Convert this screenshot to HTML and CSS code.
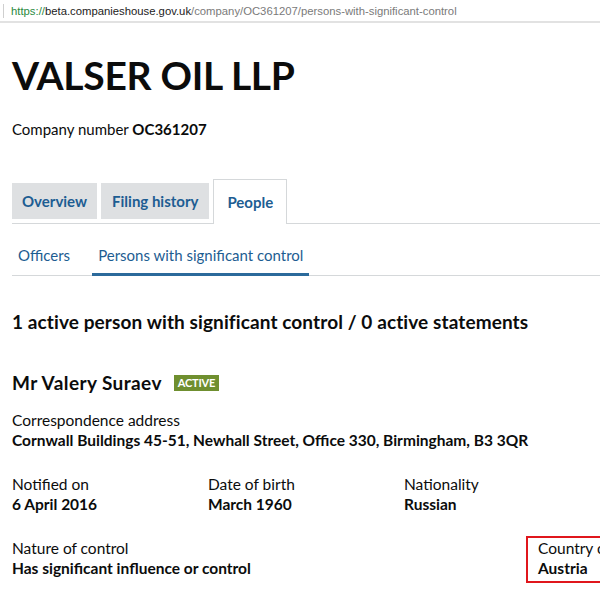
FILE: index.html
```html
<!DOCTYPE html>
<html lang="en">
<head>
    <meta charset="UTF-8">
    <title>VALSER OIL LLP - Persons with significant control</title>
    <link rel="stylesheet" href="styles.css">
</head>
<body>
    <!-- Browser address bar -->
    <div class="address-bar">
        <span class="url"><span class="url-scheme">https://</span><span class="url-host">beta.companieshouse.gov.uk</span>/company/OC361207/persons-with-significant-control</span>
    </div>

    <div class="page">
        <h1 class="company-name">VALSER OIL LLP</h1>
        <p class="company-number">Company number <strong>OC361207</strong></p>

        <!-- Main tabs -->
        <ul class="tabs">
            <li class="tab">Overview</li>
            <li class="tab">Filing history</li>
            <li class="tab active">People</li>
        </ul>

        <!-- Sub tabs -->
        <ul class="subtabs">
            <li class="subtab">Officers</li>
            <li class="subtab active">Persons with significant control</li>
        </ul>

        <h2 class="summary">1 active person with significant control / 0 active statements</h2>

        <div class="person">
            <h3 class="person-name">Mr Valery Suraev <span class="status">Active</span></h3>

            <dl class="field">
                <dt>Correspondence address</dt>
                <dd>Cornwall Buildings 45-51, Newhall Street, Office 330, Birmingham, B3 3QR</dd>
            </dl>

            <div class="field-row">
                <dl class="field col">
                    <dt>Notified on</dt>
                    <dd>6 April 2016</dd>
                </dl>
                <dl class="field col">
                    <dt>Date of birth</dt>
                    <dd>March 1960</dd>
                </dl>
                <dl class="field col">
                    <dt>Nationality</dt>
                    <dd>Russian</dd>
                </dl>
            </div>

            <div class="field-row">
                <dl class="field nature">
                    <dt>Nature of control</dt>
                    <dd>Has significant influence or control</dd>
                </dl>
                <dl class="field country">
                    <dt>Country of residence</dt>
                    <dd>Austria</dd>
                </dl>
            </div>
        </div>
    </div>
</body>
</html>
```

FILE: styles.css
```css
/* General */
body {
    margin: 0;
    padding: 0;
    background: #fff;
    color: #0b0c0c;
    font-family: Lato, "Liberation Sans", sans-serif;
    overflow: hidden;
}

/* Address bar */
.address-bar {
    height: 21px;
    border-bottom: 2px solid #e2e2e2;
    padding-left: 3px;
    display: flex;
    align-items: center;
}

.url {
    border-left: 1px solid #cfcfcf;
    padding-left: 7px;
    font-family: "Liberation Sans", sans-serif;
    font-size: 11.3px;
    line-height: 14px;
    color: #7a7a7a;
}

.url-scheme {
    color: #2b8a3e;
}

.url-host {
    color: #222;
}

/* Page */
.page {
    padding: 0 0 0 12px;
}

.company-name {
    font-size: 39px;
    font-weight: 700;
    line-height: 48px;
    margin: 28px 0 0;
    letter-spacing: -0.3px;
}

.company-number {
    font-size: 15px;
    margin: 20px 0 0;
    line-height: 20px;
}

.company-number strong {
    font-weight: 700;
}

/* Tabs */
.tabs {
    list-style: none;
    margin: 40px 0 0;
    padding: 0;
    display: flex;
    align-items: flex-end;
    gap: 4px;
    border-bottom: 1px solid #d5d8da;
}

.tab {
    background: #dee0e2;
    color: #1d5d92;
    font-size: 15px;
    font-weight: 700;
    height: 36px;
    line-height: 36px;
    padding: 0 10px;
    margin-bottom: 4px;
}

.tab + .tab {
    padding: 0 11px;
}

.tab.active {
    background: #fff;
    border: 1px solid #d5d8da;
    border-bottom: none;
    height: 44px;
    line-height: 44px;
    padding: 0 13px;
    margin-bottom: -1px;
}

/* Sub tabs */
.subtabs {
    list-style: none;
    margin: 0;
    padding: 0;
    display: flex;
    gap: 16px;
    border-bottom: 1px solid #d5d8da;
}

.subtab {
    color: #1d5d92;
    font-size: 15px;
    padding: 22px 6px 9px;
    border-bottom: 3px solid transparent;
    margin-bottom: -1px;
}

.subtab.active {
    border-bottom-color: #2b6a9b;
}

/* Summary */
.summary {
    font-size: 19px;
    font-weight: 700;
    margin: 34px 0 0;
    line-height: 24px;
    letter-spacing: 0.1px;
}

/* Person */
.person-name {
    font-size: 19px;
    font-weight: 700;
    margin: 37px 0 0;
    line-height: 24px;
    letter-spacing: 0.4px;
    display: flex;
    align-items: center;
}

.status {
    background: #6f8f2f;
    color: #fff;
    font-size: 11px;
    font-weight: 700;
    text-transform: uppercase;
    padding: 2px 4px;
    line-height: 12px;
    margin-left: 12px;
    letter-spacing: -0.2px;
}

.field {
    margin: 0;
    font-size: 15.5px;
    line-height: 20px;
}

.field dd {
    margin: 0;
    font-weight: 700;
}

.person > .field {
    margin-top: 15px;
}

.field-row {
    display: flex;
    margin-top: 24px;
}

.col {
    width: 197px;
}

.nature {
    width: 514px;
    flex-shrink: 0;
}

.country {
    flex-shrink: 0;
    border: 2px solid #e0161c;
    padding: 0 10px 3px 10px;
    margin-top: -2px;
    white-space: nowrap;
}
```
